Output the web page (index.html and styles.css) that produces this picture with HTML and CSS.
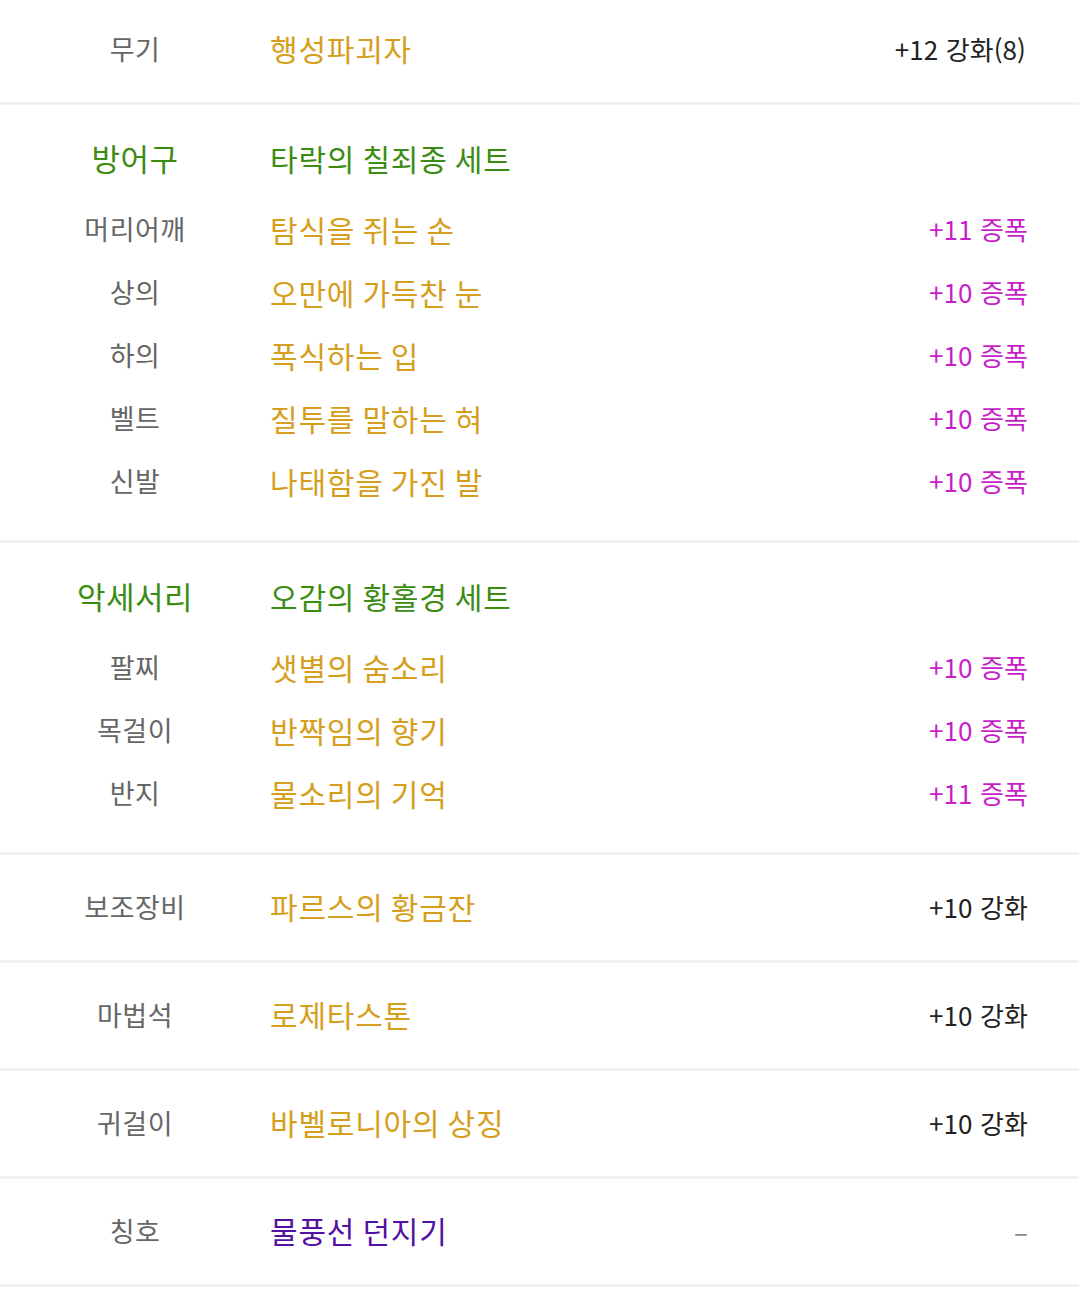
FILE: index.html
```html
<!DOCTYPE html>
<html lang="ko">
<head>
  <meta charset="UTF-8">
  <title>장비 정보</title>
  <meta name="viewport" content="width=device-width, initial-scale=1.0">
  <link rel="stylesheet" href="styles.css">
</head>
<body>
  <div class="equip-list">

    <div class="equip-section single first">
      <div class="row">
        <span class="slot">무기</span>
        <span class="name gold">행성파괴자</span>
        <span class="value">+12 강화(8)</span>
      </div>
    </div>

    <div class="equip-section group">
      <div class="row head">
        <span class="slot">방어구</span>
        <span class="name">타락의 칠죄종 세트</span>
        <span class="value"></span>
      </div>
      <div class="row">
        <span class="slot">머리어깨</span>
        <span class="name gold">탐식을 쥐는 손</span>
        <span class="value amp">+11 증폭</span>
      </div>
      <div class="row">
        <span class="slot">상의</span>
        <span class="name gold">오만에 가득찬 눈</span>
        <span class="value amp">+10 증폭</span>
      </div>
      <div class="row">
        <span class="slot">하의</span>
        <span class="name gold">폭식하는 입</span>
        <span class="value amp">+10 증폭</span>
      </div>
      <div class="row">
        <span class="slot">벨트</span>
        <span class="name gold">질투를 말하는 혀</span>
        <span class="value amp">+10 증폭</span>
      </div>
      <div class="row">
        <span class="slot">신발</span>
        <span class="name gold">나태함을 가진 발</span>
        <span class="value amp">+10 증폭</span>
      </div>
    </div>

    <div class="equip-section group">
      <div class="row head">
        <span class="slot">악세서리</span>
        <span class="name">오감의 황홀경 세트</span>
        <span class="value"></span>
      </div>
      <div class="row">
        <span class="slot">팔찌</span>
        <span class="name gold">샛별의 숨소리</span>
        <span class="value amp">+10 증폭</span>
      </div>
      <div class="row">
        <span class="slot">목걸이</span>
        <span class="name gold">반짝임의 향기</span>
        <span class="value amp">+10 증폭</span>
      </div>
      <div class="row">
        <span class="slot">반지</span>
        <span class="name gold">물소리의 기억</span>
        <span class="value amp">+11 증폭</span>
      </div>
    </div>

    <div class="equip-section single">
      <div class="row">
        <span class="slot">보조장비</span>
        <span class="name gold">파르스의 황금잔</span>
        <span class="value">+10 강화</span>
      </div>
    </div>

    <div class="equip-section single">
      <div class="row">
        <span class="slot">마법석</span>
        <span class="name gold">로제타스톤</span>
        <span class="value">+10 강화</span>
      </div>
    </div>

    <div class="equip-section single">
      <div class="row">
        <span class="slot">귀걸이</span>
        <span class="name gold">바벨로니아의 상징</span>
        <span class="value">+10 강화</span>
      </div>
    </div>

    <div class="equip-section single">
      <div class="row">
        <span class="slot">칭호</span>
        <span class="name purple">물풍선 던지기</span>
        <span class="value none">–</span>
      </div>
    </div>

  </div>
</body>
</html>
```

FILE: styles.css
```css
* {
  box-sizing: border-box;
}

body {
  margin: 0;
  font-family: "Noto Sans CJK KR", "Noto Sans", sans-serif;
  background: #fff;
  color: #222;
}

.equip-list {
  width: 100%;
}

.equip-section {
  border-bottom: 3px solid #f1f1f1;
}

.row {
  display: grid;
  grid-template-columns: 270px 1fr auto;
  align-items: center;
  padding-right: 51px;
}

.slot {
  text-align: center;
  font-size: 27px;
  letter-spacing: 0.5px;
  color: #666;
}

.name {
  font-size: 30px;
  letter-spacing: 0.8px;
  word-spacing: -2px;
}

.value {
  font-size: 26px;
  letter-spacing: 0.1px;
  color: #222;
  text-align: right;
}

.gold {
  color: #d59e1c;
}

.purple {
  color: #5310a2;
}

.value.amp {
  color: #c61fc9;
}

.value.none {
  color: #888;
}

/* single-line sections */
.single .row {
  height: 105px;
  padding-bottom: 3px;
}

.single.first .row {
  height: 102px;
  padding-bottom: 6px;
}

.first .value {
  padding-right: 2px;
}

/* grouped sections (set items) */
.group {
  display: flex;
  flex-direction: column;
  padding: 21px 0 28px;
}

.group .row {
  height: 63px;
}

.group .row.head {
  margin-bottom: 8px;
}

.head .slot,
.head .name {
  color: #3b8c12;
}

.head .slot {
  font-size: 31px;
}
```
